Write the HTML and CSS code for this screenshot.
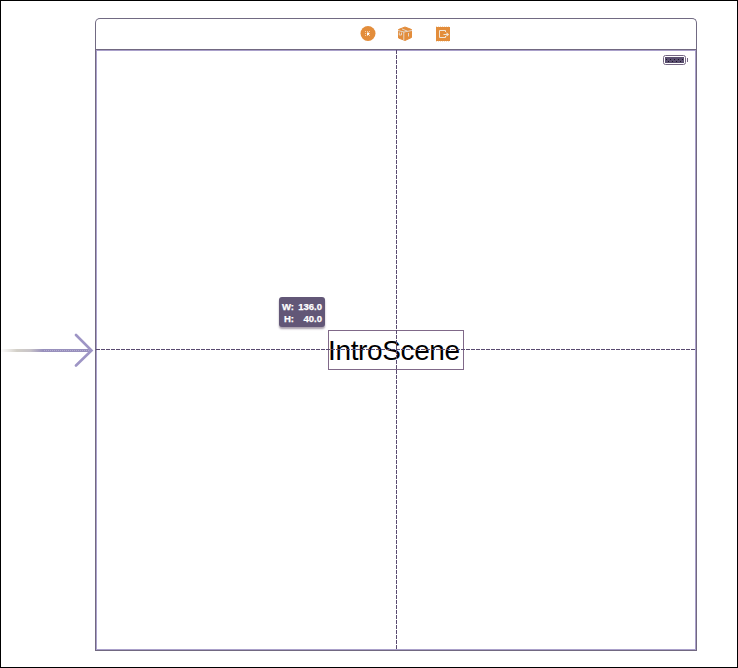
FILE: index.html
```html
<!DOCTYPE html>
<html lang="en">
<head>
<meta charset="utf-8">
<title>Storyboard</title>
<link rel="stylesheet" href="styles.css">
</head>
<body>
<main class="canvas">
  <div class="entry">
    <svg class="arrow" width="94" height="36" viewBox="0 0 94 36">
      <defs>
        <linearGradient id="fade" gradientUnits="userSpaceOnUse" x1="0" y1="0" x2="94" y2="0">
          <stop offset="0" stop-color="#d8d4d0" stop-opacity="0"/>
          <stop offset=".18" stop-color="#d3d0c8"/>
          <stop offset=".32" stop-color="#c8c4c8"/>
          <stop offset=".46" stop-color="#9890bc"/>
        </linearGradient>
      </defs>
      <rect x="1" y="18" width="90" height="3" fill="url(#fade)"/>
      <path d="M44 19.5H90" stroke="#b5aed2" stroke-dasharray="1 1"/>
      <path d="M76 4L91.5 19.5L76 34.5" fill="none" stroke="#9e95c5" stroke-width="2.6" stroke-linecap="round"/>
    </svg>
  </div>
  <section class="scene">
    <header class="dock">
      <svg width="16" height="16" viewBox="0 0 16 16">
        <circle cx="8" cy="7.5" r="7.5" fill="#e38d3b"/>
        <path d="M5 5.5H11M5 7.5H11M5 9.5H11" stroke="#f3cfab" stroke-dasharray="1 1"/>
        <rect x="7" y="6.5" width="2" height="2.5" fill="#fff"/>
      </svg>
      <svg width="16" height="16" viewBox="0 0 16 16">
        <path d="M1.5 3.5L8 1L14.5 3.5V11.5L8 14.5L1.5 12Z" fill="#e38d3b" stroke="#e38d3b" stroke-linejoin="round"/>
        <path d="M1 4.5L7 6L15 4.5M6.8 6V14.5M5 3L10.5 5.2M2.3 6.5V9H4.5V6.5M11.5 7V10.5" fill="none" stroke="#e5d6c7"/>
      </svg>
      <svg width="16" height="16" viewBox="0 0 16 16">
        <rect x="1" y="1" width="14" height="14" fill="#e38d3b"/>
        <path d="M1 .5H15M1 15.5H15" stroke="#f6dfc6" stroke-dasharray="1 1"/>
        <path d="M10.5 6V4.5H4.5V11.5H10.5V10M8.5 8.5H13" fill="none" stroke="#f0e4d5"/>
        <path d="M11.5 6.2L14.2 8.5L11.5 10.8Z" fill="#f0e4d5"/>
      </svg>
    </header>
    <div class="view">
      <svg class="battery" width="26" height="12" viewBox="0 0 26 12">
        <rect x=".5" y="1.5" width="22" height="9" rx="2" fill="#fff" stroke="#756783"/>
        <rect x="2" y="3" width="19" height="6" fill="#5b5070"/>
        <path d="M3 5.5H20M5 7.5H20" stroke="#1b1727" stroke-dasharray="1 3"/>
        <path d="M24.5 4V8" stroke="#756783"/>
      </svg>
      <div class="label">IntroScene</div>
      <div class="guide guide-v"></div>
      <div class="guide guide-h"></div>
      <dl class="size"><dt>W:</dt><dd>136.0</dd><dt>H:</dt><dd>40.0</dd></dl>
    </div>
  </section>
</main>
</body>
</html>
```
FILE: styles.css
```css
* { box-sizing: border-box; }
body { margin: 0; background: #fff; font-family: "Liberation Sans", Arial, sans-serif; }
.canvas {
  display: grid;
  grid-template-columns: 94px 602px;
  width: 738px;
  height: 668px;
  padding-top: 17px;
  border: 1px solid #000;
  overflow: hidden;
}
.entry { padding-top: 313px; margin-left: -1px; }
.arrow { display: block; }
.scene { height: 633px; }
.dock {
  display: flex;
  justify-content: center;
  align-items: center;
  gap: 21.5px;
  height: 31px;
  padding-left: 18px;
  border: 1px solid #716a82;
  border-bottom: 0;
  border-radius: 5px 5px 0 0;
}
.view {
  position: relative;
  display: grid;
  place-items: center;
  height: 602px;
  border: 1px solid #716881;
  box-shadow: inset 0 0 0 1px #aaa0ca;
}
.battery { position: absolute; top: 4px; right: 7px; }
.label {
  width: 136px;
  height: 40px;
  border: 1px solid #806989;
  color: #000;
  font-size: 28px;
  letter-spacing: -.38px;
  line-height: 39px;
  text-indent: -.9px;
  white-space: nowrap;
}
.guide { position: absolute; }
.guide-v {
  top: 0;
  bottom: 0;
  left: 300px;
  width: 1px;
  background: repeating-linear-gradient(to bottom, #594a70 0 4px, transparent 4px 5px);
}
.guide-h {
  top: 299px;
  left: 0;
  right: 0;
  height: 1px;
  background: repeating-linear-gradient(to right, #594a70 0 4px, transparent 4px 5px);
}
.size {
  position: absolute;
  top: 247px;
  left: 183px;
  display: grid;
  grid-template-columns: 12px 28px;
  grid-auto-rows: 12px;
  width: 46px;
  height: 30px;
  margin: 0;
  padding: 4px 3px;
  border-radius: 3px;
  background: #625777;
  box-shadow: 0 2px 2px #a9a0ad;
  color: #fff;
  font-size: 9.5px;
  font-weight: bold;
  line-height: 12px;
  text-align: right;
  -webkit-text-stroke: .25px #fff;
}
.size dt, .size dd { margin: 0; }
```
